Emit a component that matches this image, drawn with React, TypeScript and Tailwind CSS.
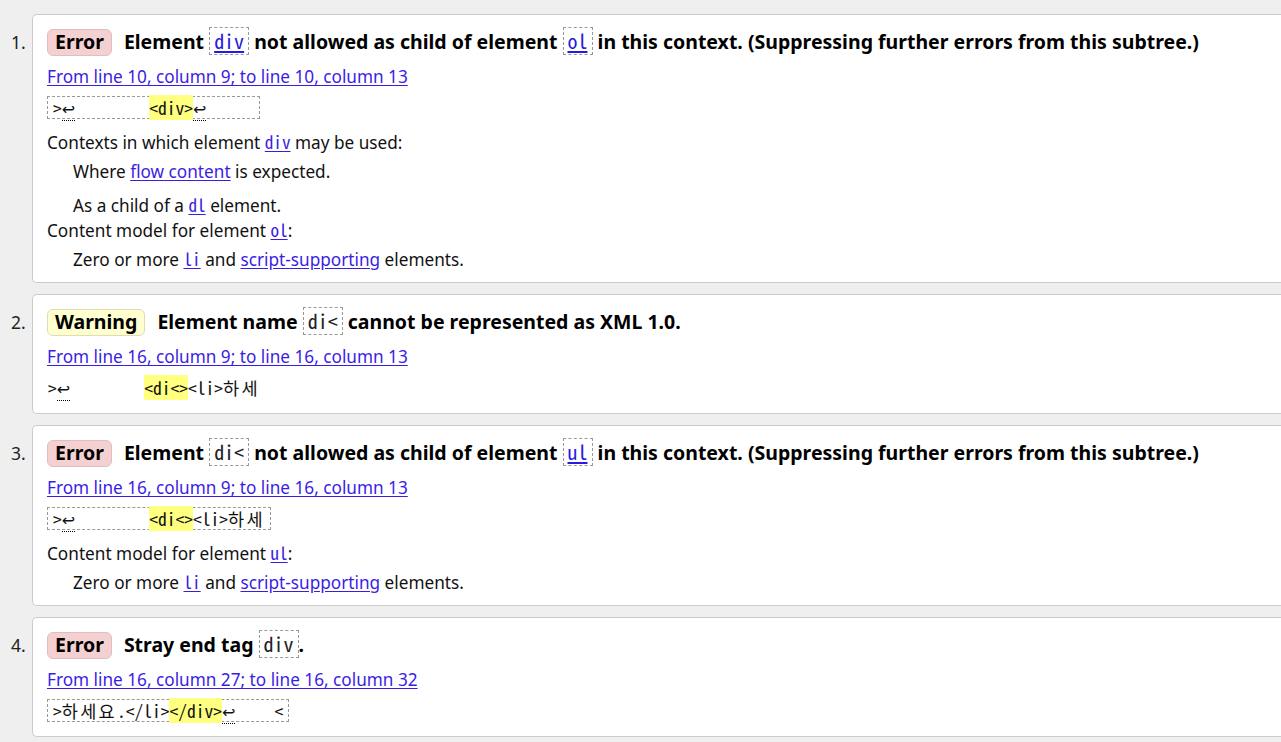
import React from "react";

const mono = "font-['Noto_Sans_Mono_CJK_KR','Noto_Sans_Mono_CJK_SC','DejaVu_Sans_Mono',monospace]";

function Code({ children, link }: { children: React.ReactNode; link?: boolean }) {
  return (
    <code
      className={`inline-block border border-dashed border-[#999] px-[4px] text-[20px] leading-[26px] font-normal ${mono} ${
        link ? "text-[#2a1ae0] underline underline-offset-2" : "text-[#222]"
      }`}
    >
      {children}
    </code>
  );
}

function A({ children, code }: { children: React.ReactNode; code?: boolean }) {
  return <a className={`text-[#3a1de4] underline underline-offset-2 ${code ? mono + " leading-none" : ""}`}>{children}</a>;
}

function Badge({ kind }: { kind: "Error" | "Warning" }) {
  return (
    <span
      className={`inline-flex h-[27px] items-center rounded-[6px] border px-[7px] text-[19.5px] font-bold leading-none text-black ${
        kind === "Error" ? "border-[#e0bebe] bg-[#f4d1d0]" : "border-[#dedcb0] bg-[#ffffcf]"
      }`}
    >
      {kind}
    </span>
  );
}

// line-break marker, two cells wide like in the reference
function Lf() {
  return (
    <span className="inline-block w-[2ch] text-left leading-none">
      <span className="border-b border-dotted border-black pb-[1px] font-['DejaVu_Sans',sans-serif] text-[16px] leading-none">↩</span>
    </span>
  );
}

function Hl({ children }: { children: React.ReactNode }) {
  return <span className="bg-[#ffff80]">{children}</span>;
}

function Ko({ children }: { children: React.ReactNode }) {
  return <span className="tracking-[2.3px]">{children}</span>;
}

function Extract({ children, boxed = true }: { children: React.ReactNode; boxed?: boolean }) {
  return (
    <div className="mt-[7px] flex">
      <code
        className={`block h-[23px] whitespace-pre text-[17.5px] leading-[21px] text-[#111] ${mono} ${
          boxed ? "border border-dashed border-[#999] px-[5px]" : "border border-transparent"
        }`}
      >
        {children}
      </code>
    </div>
  );
}

function Card({ n, pb, children }: { n: number; pb: string; children: React.ReactNode }) {
  return (
    <li className="flex">
      <div className="w-[32px] shrink-0 pt-[14px] pl-[11px] text-[17.5px] leading-[28px] text-[#222]">{n}.</div>
      <div className={`flex-1 rounded-l-[5px] border border-r-0 border-[#cbcbcb] bg-white pl-[14px] pt-[13px] ${pb}`}>
        {children}
      </div>
    </li>
  );
}

function Head({ kind, children }: { kind: "Error" | "Warning"; children: React.ReactNode }) {
  return (
    <div className="flex h-[28px] items-center gap-[12px] whitespace-nowrap">
      <Badge kind={kind} />
      <span className="text-[19.5px] font-bold text-black">{children}</span>
    </div>
  );
}

function Loc({ children }: { children: React.ReactNode }) {
  return (
    <div className="mt-[9px] h-[24px] leading-[24px]">
      <A>{children}</A>
    </div>
  );
}

export default function App() {
  return (
    <div className="min-h-screen overflow-hidden bg-[#efefef] pt-[14px] font-['Noto_Sans','Noto_Sans_CJK_KR',sans-serif] text-[17.2px] text-[#111]">
      <ol className="flex flex-col gap-[11px]">
        <Card n={1} pb="pb-[10px]">
          <Head kind="Error">
            Element <Code link>div</Code> not allowed as child of element <Code link>ol</Code> in this context. (Suppressing further errors from this subtree.)
          </Head>
          <Loc>From line 10, column 9; to line 10, column 13</Loc>
          <Extract>
            {">"}<Lf />{"        "}<Hl>{"<div>"}</Hl><Lf />{"     "}
          </Extract>
          <div className="mt-[12px] h-[24px] leading-[24px]">
            Contexts in which element <A code>div</A> may be used:
          </div>
          <div className="mt-[5px] h-[24px] pl-[26px] leading-[24px]">
            Where <A>flow content</A> is expected.
          </div>
          <div className="mt-[10px] h-[24px] pl-[26px] leading-[24px]">
            As a child of a <A code>dl</A> element.
          </div>
          <div className="mt-[1px] h-[24px] leading-[24px]">
            Content model for element <A code>ol</A>:
          </div>
          <div className="mt-[5px] h-[24px] pl-[26px] leading-[24px]">
            Zero or more <A code>li</A> and <A>script-supporting</A> elements.
          </div>
        </Card>

        <Card n={2} pb="pb-[14px]">
          <Head kind="Warning">
            Element name <Code>di&lt;</Code> cannot be represented as XML 1.0.
          </Head>
          <Loc>From line 16, column 9; to line 16, column 13</Loc>
          <Extract boxed={false}>
            {">"}<Lf />{"        "}<Hl>{"<di<>"}</Hl>{"<li>"}<Ko>하세</Ko>
          </Extract>
        </Card>

        <Card n={3} pb="pb-[10px]">
          <Head kind="Error">
            Element <Code>di&lt;</Code> not allowed as child of element <Code link>ul</Code> in this context. (Suppressing further errors from this subtree.)
          </Head>
          <Loc>From line 16, column 9; to line 16, column 13</Loc>
          <Extract>
            {">"}<Lf />{"        "}<Hl>{"<di<>"}</Hl>{"<li>"}<Ko>하세</Ko>
          </Extract>
          <div className="mt-[12px] h-[24px] leading-[24px]">
            Content model for element <A code>ul</A>:
          </div>
          <div className="mt-[5px] h-[24px] pl-[26px] leading-[24px]">
            Zero or more <A code>li</A> and <A>script-supporting</A> elements.
          </div>
        </Card>

        <Card n={4} pb="pb-[14px]">
          <Head kind="Error">
            Stray end tag <Code>div</Code>.
          </Head>
          <Loc>From line 16, column 27; to line 16, column 32</Loc>
          <Extract>
            {">"}<Ko>하세요</Ko>{".</li>"}<Hl>{"</div>"}</Hl><Lf />{"    <"}
          </Extract>
        </Card>
      </ol>
    </div>
  );
}
